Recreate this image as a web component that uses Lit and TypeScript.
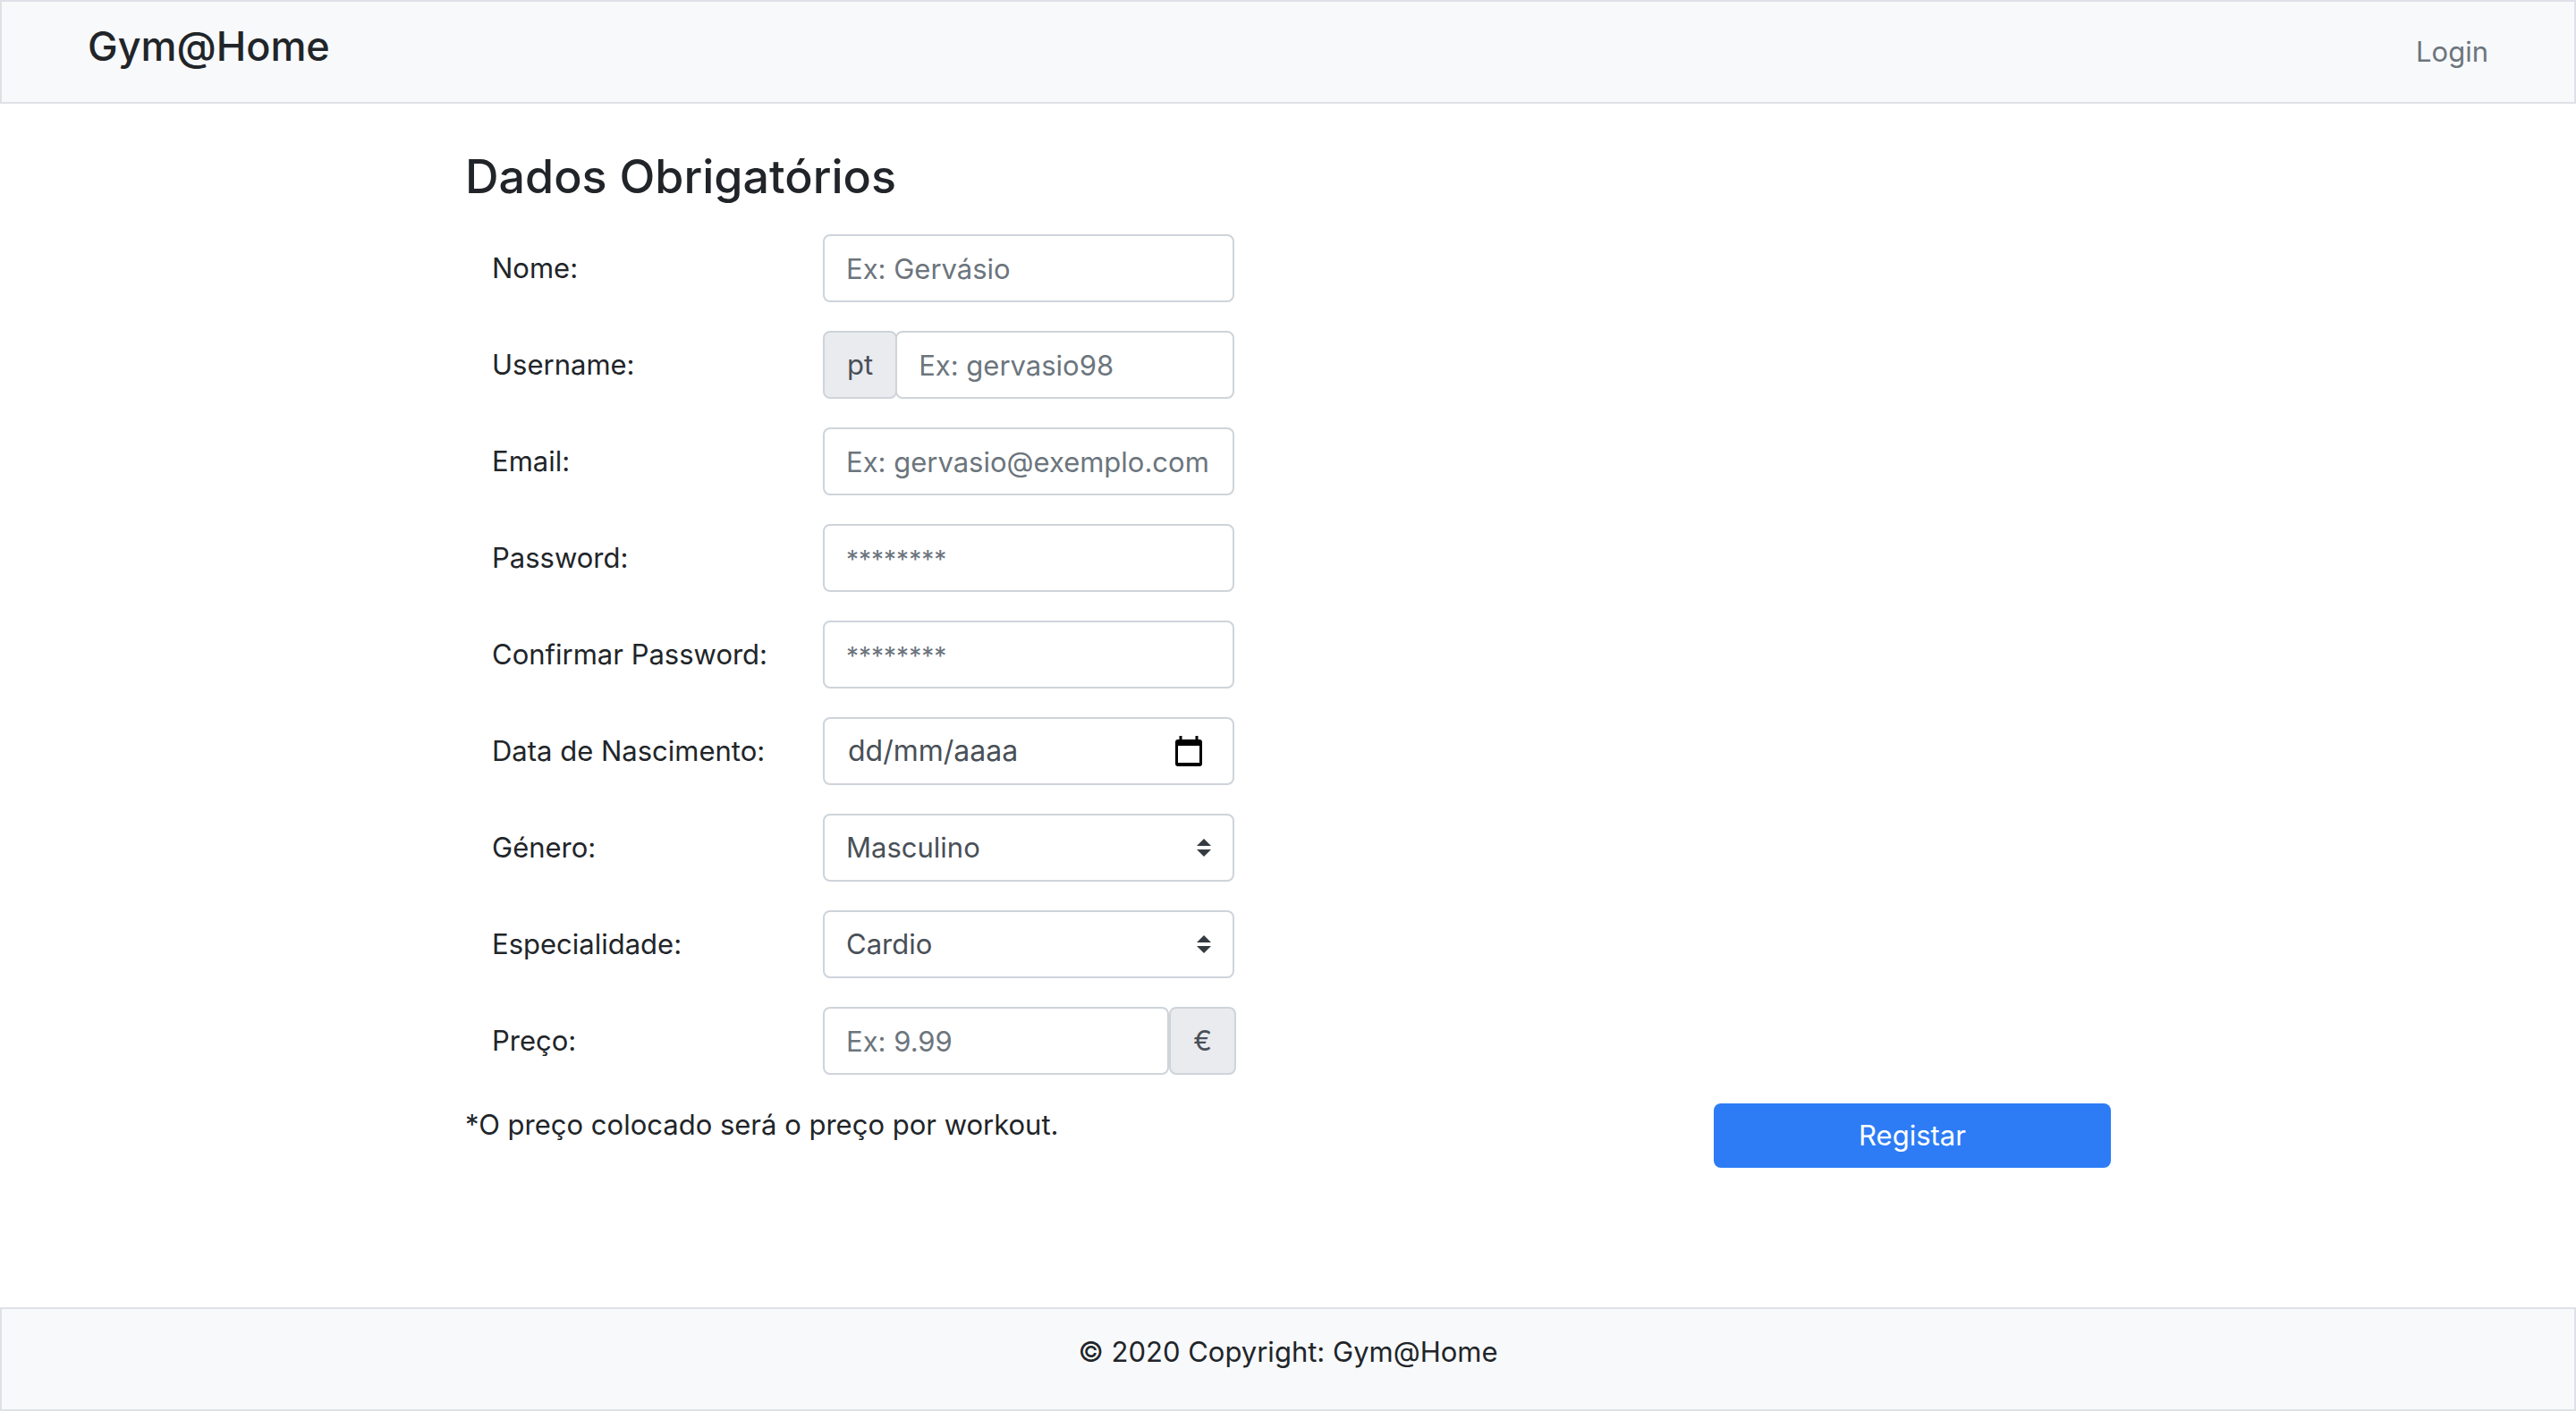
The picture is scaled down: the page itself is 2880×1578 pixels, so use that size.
import { LitElement, html, css, svg, type TemplateResult } from "lit";
import { customElement, property } from "lit/decorators.js";

/** One labelled line of the form: label on the left, control on the right. */
interface Field {
  id: string;
  label: string;
  control: (id: string) => TemplateResult;
}

const arrows = html`<svg class="arrows" viewBox="0 0 16 20" aria-hidden="true">
  ${svg`<path d="M8 0 16 8H0zM8 20 0 12h16z" fill="currentColor" />`}
</svg>`;

const calendar = html`<svg class="calendar" viewBox="0 0 30 34" aria-hidden="true">
  ${svg`<path fill="currentColor" fill-rule="evenodd" d="M4.500 0h3v4h15V0h3v4H27a3 3 0 0 1 3 3v24a3 3 0 0 1-3 3H3a3 3 0 0 1-3-3V7a3 3 0 0 1 3-3h1.500zM3 11v19h24V11z" />`}
</svg>`;

const input = (type: string, placeholder: string) => (id: string) =>
  html`<input class="control" id=${id} type=${type} placeholder=${placeholder} />`;

const secret = (id: string) =>
  html`<input class="control secret" id=${id} type="password" placeholder="********" />`;

const select = (options: string[]) => (id: string) =>
  html`<div class="select">
    <select class="control" id=${id}>
      ${options.map((o) => html`<option>${o}</option>`)}
    </select>
    ${arrows}
  </div>`;

const FIELDS: Field[] = [
  { id: "nome", label: "Nome:", control: input("text", "Ex: Gervásio") },
  {
    id: "username",
    label: "Username:",
    control: (id) => html`<div class="group">
      <span class="addon">pt</span>
      <input class="control" id=${id} type="text" placeholder="Ex: gervasio98" />
    </div>`,
  },
  { id: "email", label: "Email:", control: input("email", "Ex: gervasio@exemplo.com") },
  { id: "password", label: "Password:", control: secret },
  { id: "confirmar", label: "Confirmar Password:", control: secret },
  {
    id: "nascimento",
    label: "Data de Nascimento:",
    control: (id) => html`<div class="control date">
      <input class="date-text" id=${id} type="text" inputmode="numeric" placeholder="dd/mm/aaaa" />
      <button class="date-button" type="button" aria-label="Abrir calendário">${calendar}</button>
    </div>`,
  },
  { id: "genero", label: "Género:", control: select(["Masculino", "Feminino"]) },
  { id: "especialidade", label: "Especialidade:", control: select(["Cardio", "Yoga"]) },
  {
    id: "preco",
    label: "Preço:",
    control: (id) => html`<div class="group">
      <input class="control" id=${id} type="text" inputmode="decimal" placeholder="Ex: 9.99" />
      <span class="addon">€</span>
    </div>`,
  },
];

@customElement("register-form")
export class RegisterForm extends LitElement {
  @property({ attribute: false }) fields: Field[] = FIELDS;

  static styles = css`
    :host {
      display: block;
    }
    *,
    *::before {
      box-sizing: border-box;
    }
    .title {
      margin: 0 0 32px;
      font-size: 52px;
      line-height: 64px;
      font-weight: 500;
    }
    .rows {
      display: grid;
      gap: 32px;
    }
    .row {
      display: grid;
      grid-template-columns: 370px 460px;
      align-items: center;
      padding-left: 30px;
    }
    .control {
      width: 100%;
      min-width: 0;
      height: 76px;
      margin: 0;
      padding: 12px 24px;
      border: 2px solid #ced4da;
      border-radius: 8px;
      background: #fff;
      color: #495057;
      font: inherit;
      appearance: none;
    }
    .control::placeholder {
      color: #6c757d;
      opacity: 1;
    }
    .secret::placeholder {
      font-size: 28px;
    }
    .group {
      display: flex;
    }
    .group .control {
      flex: 1;
    }
    .addon {
      display: flex;
      align-items: center;
      padding: 0 25px;
      margin-right: -2px;
      border: 2px solid #ced4da;
      border-radius: 8px;
      background: #e9ebef;
      color: #495057;
    }
    .select {
      display: grid;
      align-items: center;
      color: #343a40;
    }
    .select > * {
      grid-area: 1 / 1;
    }
    .arrows {
      width: 16px;
      height: 20px;
      margin-right: 26px;
      justify-self: end;
      pointer-events: none;
    }
    .date {
      display: flex;
      align-items: center;
    }
    .date-text {
      flex: 1;
      min-width: 0;
      padding: 0 2px;
      border: 0;
      outline: 0;
      background: none;
      color: inherit;
      font: inherit;
      font-size: 32px;
    }
    .date-text::placeholder {
      color: #495057;
      opacity: 1;
    }
    .date-button {
      display: flex;
      padding: 0 10px;
      border: 0;
      background: none;
      color: #000;
    }
    .calendar {
      width: 30px;
      height: 34px;
    }
    .actions {
      display: flex;
      justify-content: space-between;
      align-items: flex-start;
      margin-top: 32px;
    }
    .note {
      margin: 0;
    }
    .submit {
      width: 444px;
      padding: 12px;
      border: 0;
      border-radius: 8px;
      background: #2d7cf6;
      color: #fff;
      font: inherit;
    }
  `;

  render() {
    return html`<form @submit=${(e: Event) => e.preventDefault()}>
      <h2 class="title">Dados Obrigatórios</h2>
      <div class="rows">
        ${this.fields.map(
          (f) => html`<div class="row">
            <label for=${f.id}>${f.label}</label>
            ${f.control(f.id)}
          </div>`,
        )}
      </div>
      <div class="actions">
        <p class="note">*O preço colocado será o preço por workout.</p>
        <button class="submit" type="submit">Registar</button>
      </div>
    </form>`;
  }
}

@customElement("app-root")
export class AppRoot extends LitElement {
  static styles = css`
    :host {
      display: flex;
      flex-direction: column;
      box-sizing: border-box;
      min-height: 100vh;
      background: #fff;
      color: #212529;
      font: 400 31px/48px Inter, "Liberation Sans", sans-serif;
    }
    .bar {
      border: 2px solid #dfe1e7;
      background: #f8f9fb;
    }
    .header {
      display: flex;
      justify-content: space-between;
      align-items: flex-start;
      padding: 20px 96px;
    }
    .brand {
      margin: 0;
      font-size: 45px;
      line-height: 60px;
      font-weight: 500;
    }
    .login {
      padding: 12px 0;
      color: #6c757d;
      text-decoration: none;
    }
    .main {
      flex: 1;
      width: 100%;
      max-width: 1840px;
      margin: 0 auto;
      padding: 50px 0;
      box-sizing: border-box;
    }
    .footer {
      padding: 24px 0 40px;
      text-align: center;
    }
  `;

  render() {
    return html`
      <header class="bar header">
        <h1 class="brand">Gym@Home</h1>
        <a class="login" href="#login">Login</a>
      </header>
      <main class="main"><register-form></register-form></main>
      <footer class="bar footer">© 2020 Copyright: Gym@Home</footer>
    `;
  }
}
